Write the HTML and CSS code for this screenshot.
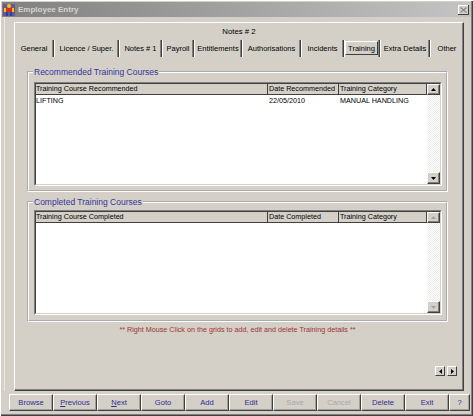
FILE: index.html
```html
<!DOCTYPE html>
<html>
<head>
<meta charset="utf-8">
<title>Employee Entry</title>
<link rel="stylesheet" href="styles.css">
</head>
<body>
<div class="window">
  <div class="titlebar">
    <svg class="appicon" width="12" height="13" viewBox="0 0 12 13">
      <rect x="0" y="1" width="12" height="12" fill="#6a5a8a"/>
      <circle cx="6" cy="3" r="2" fill="#f0c020"/>
      <rect x="3" y="5" width="6" height="4" fill="#d83020"/>
      <rect x="1" y="5" width="2" height="4" fill="#f0c020"/>
      <rect x="9" y="5" width="2" height="4" fill="#f0c020"/>
      <rect x="3" y="9" width="2" height="4" fill="#2040c0"/>
      <rect x="7" y="9" width="2" height="4" fill="#2040c0"/>
    </svg>
    <span class="title">Employee Entry</span>
    <span class="closebtn">
      <svg width="7" height="6" viewBox="0 0 7 6"><path d="M0.5 0.5L6.5 5.5M6.5 0.5L0.5 5.5" stroke="#8a8a8a" stroke-width="1.2"/></svg>
    </span>
  </div>

  <div class="client">
    <div class="tabs">
      <div class="tabrow1"><span>Notes # 2</span></div>
      <div class="tabrow2">
        <div class="tab t-general">General</div>
        <div class="tab t-licence">Licence / Super.</div>
        <div class="tab t-notes1">Notes # 1</div>
        <div class="tab t-payroll">Payroll</div>
        <div class="tab t-entitle">Entitlements</div>
        <div class="tab t-auth">Authorisations</div>
        <div class="tab t-incid">Incidents</div>
        <div class="tab t-training selected"><span class="selbox">Training</span></div>
        <div class="tab t-extra">Extra Details</div>
        <div class="tab t-other">Other</div>
      </div>
      <div class="page">
        <fieldset class="group g1">
          <legend>Recommended Training Courses</legend>
          <div class="grid gr1">
            <div class="gridin">
              <div class="gmain">
                <div class="ghead">
                  <div class="cell c1">Training Course Recommended</div>
                  <div class="cell c2">Date Recommended</div>
                  <div class="cell c3">Training Category</div>
                </div>
                <div class="grow">
                  <div class="cell c1">LIFTING</div>
                  <div class="cell c2">22/05/2010</div>
                  <div class="cell c3">MANUAL HANDLING</div>
                </div>
              </div>
              <div class="vscroll">
                <div class="sbtn"><svg width="5" height="3" viewBox="0 0 5 3"><polygon points="2.5,0 5,3 0,3" fill="#000"/></svg></div>
                <div class="strack"></div>
                <div class="sbtn"><svg width="5" height="3" viewBox="0 0 5 3"><polygon points="0,0 5,0 2.5,3" fill="#000"/></svg></div>
              </div>
            </div>
          </div>
        </fieldset>

        <fieldset class="group g2">
          <legend>Completed Training Courses</legend>
          <div class="grid gr2">
            <div class="gridin">
              <div class="gmain">
                <div class="ghead">
                  <div class="cell c1">Training Course Completed</div>
                  <div class="cell c2">Date Completed</div>
                  <div class="cell c3">Training Category</div>
                </div>
              </div>
              <div class="vscroll">
                <div class="sbtn"><svg width="5" height="3" viewBox="0 0 5 3"><polygon points="2.5,0 5,3 0,3" fill="#a0a0a0"/></svg></div>
                <div class="strack"></div>
                <div class="sbtn"><svg width="5" height="3" viewBox="0 0 5 3"><polygon points="0,0 5,0 2.5,3" fill="#a0a0a0"/></svg></div>
              </div>
            </div>
          </div>
        </fieldset>

        <p class="hint">** Right Mouse Click on the grids to add, edit and delete Training details **</p>

        <div class="navarrows">
          <span class="abtn"><svg width="3" height="5" viewBox="0 0 3 5"><polygon points="3,0 3,5 0,2.5" fill="#000"/></svg></span>
          <span class="abtn"><svg width="3" height="5" viewBox="0 0 3 5"><polygon points="0,0 3,2.5 0,5" fill="#000"/></svg></span>
        </div>
      </div>
    </div>
  </div>

  <div class="buttonbar">
    <div class="btn">Browse</div>
    <div class="btn"><span class="u">P</span>revious</div>
    <div class="btn"><span class="u">N</span>ext</div>
    <div class="btn">Goto</div>
    <div class="btn">Add</div>
    <div class="btn">Edit</div>
    <div class="btn disabled">Save</div>
    <div class="btn disabled">Cancel</div>
    <div class="btn">Delete</div>
    <div class="btn">Exit</div>
    <div class="btn help">?</div>
  </div>
</div>
</body>
</html>
```

FILE: styles.css
```css
* { box-sizing: border-box; }
html, body { margin: 0; padding: 0; }
body {
  background: #d4d0c8;
  font-family: "Liberation Sans", Arial, sans-serif;
  font-size: 7.5px;
  color: #000;
  -webkit-font-smoothing: antialiased;
}
.window {
  width: 473px;
  height: 416px;
  padding: 2px;
  background: #d4d0c8;
  box-shadow: inset 1px 1px #ffffff, inset -1px -1px #404040, inset -2px -2px #808080;
  overflow: hidden;
}
.titlebar {
  height: 15px;
  display: flex;
  align-items: center;
  padding: 0 2px 0 1px;
  background: linear-gradient(to right, #808080, #c4c4c4);
}
.appicon { flex: none; }
.title {
  flex: 1;
  margin-left: 3px;
  font-weight: bold;
  font-size: 8px;
  color: #d8d4cc;
}
.closebtn {
  width: 11px;
  height: 10px;
  background: #d4d0c8;
  box-shadow: inset -1px -1px #404040, inset 1px 1px #ffffff;
  display: flex;
  align-items: center;
  justify-content: center;
}

.client {
  margin-left: 2px;
  border-left: 1px solid #ebe9e4;
  padding: 5px 0 0 9px;
}
.tabs {
  width: 450px;
  display: flex;
  flex-direction: column;
}
.tabrow1 {
  height: 18px;
  border-top: 1px solid #ffffff;
  border-left: 1px solid #ffffff;
  border-right: 1px solid #404040;
  box-shadow: inset -1px 0 #808080;
  display: flex;
  align-items: center;
  justify-content: center;
  font-size: 7.8px;
}
.tabrow2 {
  height: 17px;
  display: flex;
}
.tab {
  height: 17px;
  border-left: 1px solid #ffffff;
  border-right: 1px solid #404040;
  box-shadow: inset -1px 0 #808080;
  display: flex;
  align-items: center;
  justify-content: center;
  white-space: nowrap;
}
.t-general { width: 40px; }
.t-licence { width: 65px; }
.t-notes1 { width: 43px; }
.t-payroll { width: 32px; }
.t-entitle { width: 48px; }
.t-auth { width: 59px; }
.t-incid { width: 43px; }
.t-training { width: 36px; justify-content: flex-start; padding-left: 0; }
.t-extra { width: 50px; }
.t-other { width: 34px; }
.selbox {
  height: 14px;
  width: 33px;
  margin-top: -1px;
  border: 1px solid;
  border-color: #ffffff #404040 #404040 #ffffff;
  display: flex;
  align-items: center;
  justify-content: center;
}

.page {
  height: 334px;
  border-left: 1px solid #ffffff;
  border-right: 1px solid #404040;
  border-bottom: 1px solid #404040;
  box-shadow: inset -1px -1px #808080;
  display: flex;
  flex-direction: column;
  padding: 0 6px 0 12px;
}
.group {
  margin: 10px 9px 0 0;
  padding: 5px 4px 4px 5px;
  border: 2px groove #ffffff;
  min-width: 0;
}
.group legend {
  padding: 0 1px;
  margin-left: -1px;
  font-size: 8.5px;
  line-height: 10px;
  color: #34349a;
}
.g2 {
  margin-top: 5px;
  padding-top: 3px;
  padding-bottom: 5px;
}
.grid {
  border: 1px solid;
  border-color: #808080 #ffffff #ffffff #808080;
}
.gr1 { height: 104px; }
.gr2 { height: 105px; }
.gridin {
  height: 100%;
  border: 1px solid;
  border-color: #404040 #d4d0c8 #d4d0c8 #404040;
  background: #ffffff;
  display: flex;
}
.gmain {
  flex: 1;
  min-width: 0;
  display: flex;
  flex-direction: column;
}
.ghead {
  height: 11px;
  display: flex;
  background: #d4d0c8;
}
.ghead .cell {
  border-right: 1px solid #404040;
  border-bottom: 1px solid #404040;
}
.grow {
  height: 12px;
  display: flex;
  align-items: center;
}
.cell {
  font-size: 7.2px;
  line-height: 10px;
  white-space: nowrap;
  overflow: hidden;
  padding-left: 0;
}
.c1 { width: 232px; }
.c2 { width: 71px; padding-left: 1px; }
.c3 { flex: 1; padding-left: 1px; }
.vscroll {
  width: 13px;
  display: flex;
  flex-direction: column;
}
.sbtn {
  height: 11px;
  background: #d4d0c8;
  border: 1px solid;
  border-color: #ffffff #404040 #404040 #ffffff;
  box-shadow: inset -1px -1px #808080;
  display: flex;
  align-items: center;
  justify-content: center;
}
.sbtn + .strack + .sbtn { height: 12px; }
.strack {
  flex: 1;
  background: repeating-conic-gradient(#ffffff 0 25%, #eeece8 0 50%) 0 0 / 2px 2px;
}

.hint {
  margin: 3px 9px 0 0;
  font-size: 7.2px;
  line-height: 9px;
  text-align: center;
  color: #a03232;
}
.navarrows {
  margin-top: 32px;
  align-self: flex-end;
  display: flex;
  gap: 2px;
}
.abtn {
  width: 10px;
  height: 10px;
  background: #d4d0c8;
  border: 1px solid;
  border-color: #ffffff #404040 #404040 #ffffff;
  display: flex;
  align-items: center;
  justify-content: center;
}

.buttonbar {
  display: flex;
  margin-top: 3px;
  padding-left: 7px;
}
.btn {
  width: 44px;
  height: 17px;
  border: 1px solid;
  border-color: #ffffff #404040 #404040 #ffffff;
  box-shadow: inset -1px -1px #a0a0a0;
  display: flex;
  align-items: center;
  justify-content: center;
  font-size: 7.6px;
  color: #2e2e8e;
}
.btn.disabled { color: #a8a8a8; }
.btn.help { width: 21px; }
.u { text-decoration: underline; }
```
